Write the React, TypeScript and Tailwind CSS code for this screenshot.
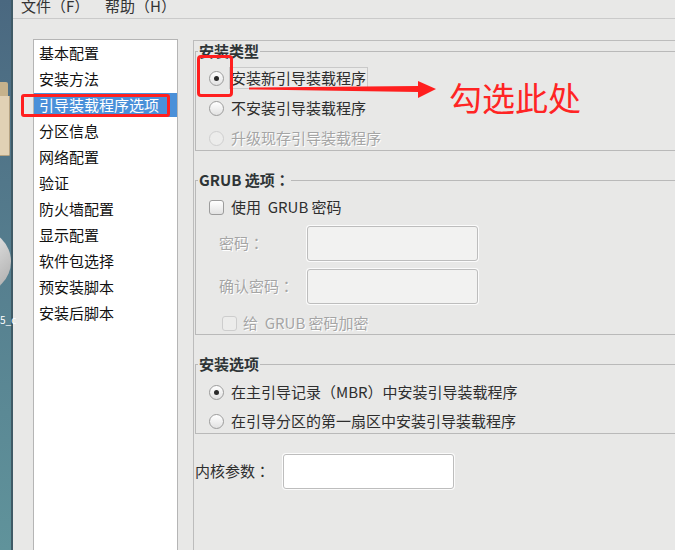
import clsx from 'clsx'

const items = [
  '基本配置',
  '安装方法',
  '引导装载程序选项',
  '分区信息',
  '网络配置',
  '验证',
  '防火墙配置',
  '显示配置',
  '软件包选择',
  '预安装脚本',
  '安装后脚本'
]

// TC face centres the full-width colon like the reference font does
const Colon = () => <span className="font-['Noto_Sans_CJK_TC',sans-serif]">：</span>

function Radio({ checked, disabled }: { checked?: boolean; disabled?: boolean }) {
  return (
    <span
      className={clsx(
        'w-[15px] h-[15px] rounded-full border flex items-center justify-center shrink-0',
        disabled
          ? 'border-[#cfcfcf] bg-[#ececeb]'
          : 'border-[#9c9c9c] bg-linear-to-b from-white to-[#e2e2e2]'
      )}
    >
      {checked && <span className="w-[5px] h-[5px] rounded-full bg-[#2a2a2a]" />}
    </span>
  )
}

function Check({ disabled }: { disabled?: boolean }) {
  return (
    <span
      className={clsx(
        'w-[15px] h-[15px] rounded-[3px] border shrink-0',
        disabled
          ? 'border-[#cdcdcd] bg-[#ececeb]'
          : 'border-[#9c9c9c] bg-linear-to-b from-white to-[#e2e2e2]'
      )}
    />
  )
}

function Frame({ title, className, children }: { title: React.ReactNode; className?: string; children: React.ReactNode }) {
  return (
    <fieldset className={clsx('border border-[#b9b9b9] -mr-[30px]', className)}>
      <legend className="ml-[2px] px-[1px] text-[15px] leading-[16px] font-bold text-[#2e3436]">{title}</legend>
      {children}
    </fieldset>
  )
}

const muted = 'text-[#a5a5a5] [text-shadow:1px_1px_0_#fff]'

export default function App() {
  return (
    <div className="relative w-[675px] h-[550px] overflow-hidden flex font-['Noto_Sans_CJK_SC','DejaVu_Sans',sans-serif] text-[15px] text-[#222]">
      {/* desktop strip */}
      <div className="relative w-[13px] shrink-0 bg-linear-to-b from-[#4a6880] via-[#567f8f] to-[#60939b] border-r-2 border-[#3f5a66]">
        <div className="absolute left-0 top-[82px] w-[8px] h-[15px] bg-[#c6b28c] rounded-tr-[2px]" />
        <div className="absolute left-0 top-[96px] w-[10px] h-[60px] bg-[#e1d1b5] border-r border-b border-[#b5a282] rounded-br-[2px]" />
        <div className="absolute left-[-52px] top-[230px] w-[63px] h-[63px] rounded-full bg-linear-to-br from-[#f4f4f4] via-[#d8d8d8] to-[#a9a9a9]" />
        <span className="absolute left-0 top-[314px] text-[10px] leading-[12px] text-white">5_c</span>
      </div>

      {/* window */}
      <div className="flex-1 bg-[#e8e8e7] flex flex-col overflow-hidden">
        <div className="h-[19px] shrink-0 border-b border-[#cacaca] flex items-start text-[#333] overflow-hidden">
          <span className="ml-[8px] w-[84px] -mt-[4px] leading-[20px]">文件（F）</span>
          <span className="-mt-[4px] leading-[20px]">帮助（H）</span>
        </div>

        <div className="flex shrink-0 items-start pt-[20px] pl-[20px]">
          <div className="w-[145px] h-[600px] shrink-0 border border-[#b5b5b5] bg-white pt-[1px] flex flex-col gap-[2px]">
            {items.map((it, i) => (
              <div
                key={it}
                className={clsx(
                  'h-[24px] pl-[5px] flex items-center',
                  i === 2 ? 'bg-[#4a90d9] text-white' : 'text-[#111]'
                )}
              >
                {it}
              </div>
            ))}
          </div>

          <div className="ml-[15px] mt-[1px] flex-1 self-stretch border-l border-t border-[#bcbcbc] pt-[2px] pl-[1px]">
            <Frame title="安装类型">
              <div className="pt-[7px] pl-[13px] flex flex-col gap-[6px]">
                <div className="h-[24px] flex items-center gap-[5px]">
                  <Radio checked />
                  <span className="h-[22px] px-[1px] flex items-center border border-[#c9c9c9] bg-[#ebebea] text-[#2e2e2e]">安装新引导装载程序</span>
                </div>
                <div className="h-[24px] flex items-center gap-[5px]">
                  <Radio />
                  <span className="px-[1px] border border-transparent text-[#2e2e2e]">不安装引导装载程序</span>
                </div>
                <div className="h-[24px] flex items-center gap-[5px]">
                  <Radio disabled />
                  <span className={clsx('px-[1px] border border-transparent', muted)}>升级现存引导装载程序</span>
                </div>
              </div>
            </Frame>

            <Frame title={<>GRUB 选项<Colon /></>} className="mt-[21px] pb-[1px]">
              <div className="pt-[7px] pl-[13px] flex flex-col">
                <div className="h-[24px] flex items-center gap-[7px] text-[#2e2e2e]">
                  <Check />
                  <span>使用&nbsp;&nbsp;GRUB 密码</span>
                </div>
                <div className="mt-[7px] ml-[10px] flex items-center">
                  <span className={clsx('w-[88px]', muted)}>密码<Colon /></span>
                  <div className="w-[171px] h-[35px] rounded-[3px] border border-[#bdbdbd] bg-[#f2f2f1] shadow-[0_0_0_1px_#fbfbfb]" />
                </div>
                <div className="mt-[8px] ml-[10px] flex items-center">
                  <span className={clsx('w-[88px]', muted)}>确认密码<Colon /></span>
                  <div className="w-[171px] h-[35px] rounded-[3px] border border-[#bdbdbd] bg-[#f2f2f1] shadow-[0_0_0_1px_#fbfbfb]" />
                </div>
                <div className="mt-[9px] ml-[13px] h-[20px] flex items-center gap-[6px]">
                  <Check disabled />
                  <span className={muted}>给&nbsp;&nbsp;GRUB 密码加密</span>
                </div>
              </div>
            </Frame>

            <Frame title="安装选项" className="mt-[21px]">
              <div className="pt-[8px] pl-[13px] flex flex-col gap-[5px] text-[#2e2e2e]">
                <div className="h-[24px] flex items-center gap-[7px]">
                  <Radio checked />
                  <span>在主引导记录（MBR）中安装引导装载程序</span>
                </div>
                <div className="h-[24px] flex items-center gap-[7px]">
                  <Radio />
                  <span>在引导分区的第一扇区中安装引导装载程序</span>
                </div>
              </div>
            </Frame>

            <div className="mt-[20px] flex items-center text-[#2e2e2e]">
              <span className="w-[88px]">内核参数<Colon /></span>
              <div className="w-[171px] h-[35px] rounded-[3px] border border-[#bdbdbd] bg-white shadow-[0_0_0_1px_#fbfbfb]" />
            </div>
          </div>
        </div>
      </div>

      {/* annotations */}
      <div className="absolute left-[21px] top-[94px] w-[149px] h-[23px] border-[3px] border-[#ff1f1f] rounded-[3px]" />
      <div className="absolute left-[197px] top-[55px] w-[36px] h-[42px] border-[3px] border-[#ff1f1f] rounded-[4px]" />
      <svg className="absolute left-0 top-0 pointer-events-none" width="675" height="550" viewBox="0 0 675 550">
        <polygon points="249,87.5 418,86 418,81 436,89 418,98 418,92 249,89.5" fill="#ff1f1f" />
      </svg>
      <span className="absolute left-[449px] top-[78px] text-[33px] leading-[38px] text-[#ff2424]">勾选此处</span>
    </div>
  )
}
